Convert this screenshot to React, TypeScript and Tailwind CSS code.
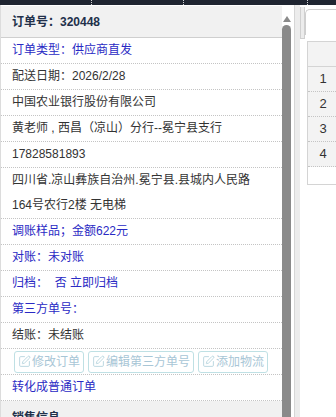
import React from 'react'
import { SquarePen } from 'lucide-react'

const rows: { text: string[]; blue?: boolean }[] = [
  { text: ['订单类型：供应商直发'], blue: true },
  { text: ['配送日期：2026/2/28'] },
  { text: ['中国农业银行股份有限公司'] },
  { text: ['黄老师 , 西昌（凉山）分行--冕宁县支行'] },
  { text: ['17828581893'] },
  { text: ['四川省.凉山彝族自治州.冕宁县.县城内人民路', '164号农行2楼 无电梯'] },
  { text: ['调账样品；金额622元'], blue: true },
  { text: ['对账：未对账'], blue: true },
  { text: ['归档：  否 立即归档'], blue: true },
  { text: ['第三方单号：'], blue: true },
  { text: ['结账：未结账'] }
]

const EditButton = ({ label }: { label: string }) => (
  <button className="h-[22px] flex items-center gap-px pl-[3px] pr-[3px] border border-[#bfe0e4] rounded-[3px] bg-white text-[#a8c6d6] text-[12px] leading-none">
    <SquarePen size={13} strokeWidth={1.4} className="text-[#a8cbd8]" />
    {label}
  </button>
)

export default function App() {
  return (
    <div className="w-[336px] h-[417px] overflow-hidden bg-white font-['Liberation_Sans','Noto_Sans_CJK_SC',sans-serif] text-[12px]">
      {/* top bar */}
      <div className="h-[5px] bg-[#1f2531] relative">
        <span className="absolute left-[91px] top-0 h-[5px] border-l border-dotted border-white/80" />
        <span className="absolute left-[183px] top-0 h-[5px] border-l border-dotted border-white/80" />
        <span className="absolute left-[307px] top-0 h-[5px] border-l border-dotted border-white/80" />
      </div>

      <div className="flex h-[412px]">
        {/* left panel */}
        <div className="w-[282px] shrink-0 border-l border-[#dcdcdc] pt-px flex flex-col">
          <div className="h-[32px] shrink-0 bg-[#f1f1f1] border-b border-[#cfcfcf] pl-[11px] flex items-center font-bold text-[12px] text-[#22304a]">
            订单号：320448
          </div>
          {rows.map((r, i) => (
            <div
              key={i}
              className={`shrink-0 border-b border-dotted border-[#c4c4c4] pl-[11px] pr-2 leading-[25px] whitespace-pre ${r.blue ? 'text-[#2a2ac4]' : 'text-[#333]'}`}
            >
              {r.text.map((t, j) => (
                <div key={j} className="h-[25px]">
                  {t}
                </div>
              ))}
            </div>
          ))}
          <div className="h-[26px] shrink-0 border-b border-dotted border-[#c4c4c4] pl-[13px] flex items-center gap-[4px]">
            <EditButton label="修改订单" />
            <EditButton label="编辑第三方单号" />
            <EditButton label="添加物流" />
          </div>
          <div className="h-[26px] shrink-0 border-b border-dotted border-[#c4c4c4] pl-[11px] leading-[25px] text-[#2a2ac4]">
            转化成普通订单
          </div>
          <div className="flex-1 bg-[#f1f1f1] pl-[11px] pt-[8px] font-bold text-[12px] text-[#22304a]">
            销售信息
          </div>
        </div>

        {/* scrollbar */}
        <div className="w-[12px] shrink-0 flex flex-col items-start">
          <div className="w-[9px] h-[19px] flex items-end justify-center pb-[2px]">
            <div className="w-0 h-0 border-l-[4px] border-r-[4px] border-b-[6px] border-l-transparent border-r-transparent border-b-[#8a8a8a]" />
          </div>
          <div className="w-[9px] flex-1 mt-[1px] bg-[#8a8a8a] rounded-t-[5px]" />
        </div>
        <div className="w-[6px] shrink-0 bg-[#ececec] border-l border-[#d6d6d6]" />

        {/* right panel */}
        <div className="flex-1 flex flex-col">
          <div className="flex">
            <div className="w-[5px] h-[32px] mt-[2px] bg-[#ececec] border border-[#d0d0d0] border-t-0" />
            <div className="flex-1 h-[26px] mt-[4px] border-l border-t border-[#cfcfcf] rounded-tl-[5px]" />
          </div>
          <div className="ml-[7px] mt-[2px] h-[144px] border border-[#d4d4d4] border-r-0">
            <div className="h-[25px] bg-[#f3f3f3] border-b border-[#d4d4d4]" />
            {[1, 2, 3, 4].map((n) => (
              <div
                key={n}
                className="h-[25px] w-[30px] bg-[#f3f3f3] border-b border-dotted border-[#c4c4c4] flex items-center justify-center text-[13px] text-[#333]"
              >
                {n}
              </div>
            ))}
          </div>
        </div>
      </div>
    </div>
  )
}
